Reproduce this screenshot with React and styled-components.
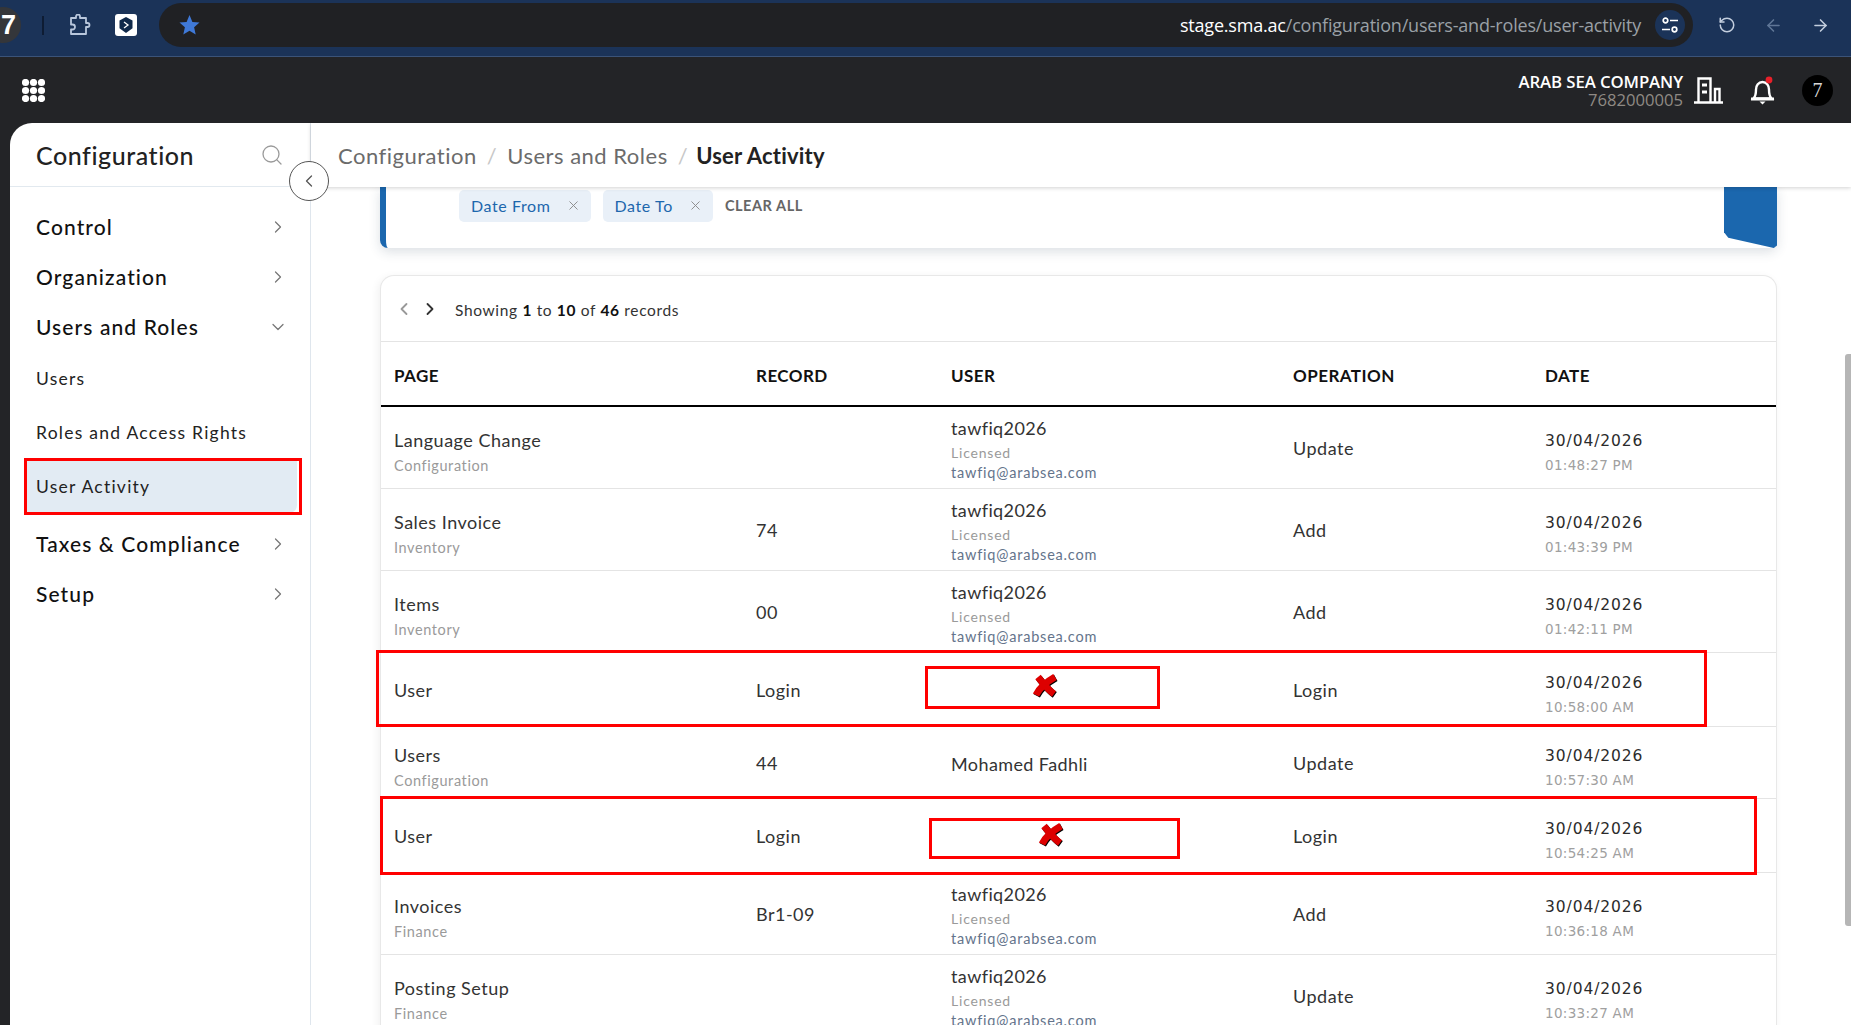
import React from 'react';
import styled, { createGlobalStyle } from 'styled-components';
import { ChevronDown, ChevronLeft, ChevronRight, ArrowLeft, ArrowRight, RotateCcw, Search, X } from 'lucide-react';

const GlobalStyle = createGlobalStyle`
  html, body { margin: 0; padding: 0; height: 100%; overflow: hidden; background: #fff; }
  body { font-family: 'Lato', 'Noto Sans', sans-serif; }
  * { box-sizing: border-box; }
`;

const Page = styled.div`
  position: relative;
  width: 1851px;
  height: 1025px;
  overflow: hidden;
  display: flex;
  flex-direction: column;
`;

const BrowserBar = styled.div`
  height: 57px;
  flex: none;
  background: #1b3358;
  border-bottom: 1px solid #3b5378;
  padding-bottom: 6px;
  display: flex;
  align-items: center;
  position: relative;
`;

const ProfileBadge = styled.div`
  width: 36px;
  height: 36px;
  margin-left: -15px;
  border-radius: 50%;
  background: #34363a;
  color: #fff;
  font-family: 'Liberation Sans', sans-serif;
  font-weight: 700;
  font-size: 27px;
  line-height: 36px;
  text-align: right;
  padding-right: 5px;
  flex: none;
`;

const BarDivider = styled.div`
  width: 2px;
  height: 19px;
  background: #0e1c33;
  margin: 0 25px 0 21px;
  flex: none;
`;

const ExtIcons = styled.div`
  display: flex;
  align-items: center;
  gap: 24px;
  width: 90px;
  flex: none;
`;

const AddressBar = styled.div`
  width: 1534px;
  height: 44px;
  flex: none;
  background: #202124;
  border-radius: 22px;
  display: flex;
  align-items: center;
  padding: 0 8px 0 20px;
`;

const UrlText = styled.div`
  margin-left: auto;
  font-family: 'Open Sans', sans-serif;
  font-size: 18px;
  letter-spacing: -0.2px;
  color: #9aa0a6;
  white-space: nowrap;
  span { color: #fff; }
`;

const TuneButton = styled.div`
  width: 30px;
  height: 30px;
  margin-left: 14px;
  border-radius: 50%;
  background: #1b3358;
  display: flex;
  align-items: center;
  justify-content: center;
  flex: none;
`;

const NavButtons = styled.div`
  display: flex;
  align-items: center;
  gap: 28px;
  margin-left: 25px;
  color: #c3cede;
`;

const AppHeader = styled.header`
  height: 66px;
  flex: none;
  background: #232427;
  display: flex;
  align-items: center;
  padding: 0 18px 0 22px;
`;

const Company = styled.div`
  margin-left: auto;
  padding-top: 1px;
  text-align: right;
  line-height: 18px;
  font-family: 'Open Sans', sans-serif;
`;

const CompanyName = styled.div`
  color: #fff;
  font-size: 16.8px;
  font-weight: 600;
  letter-spacing: -0.1px;
`;

const CompanyCode = styled.div`
  color: #8f8a84;
  font-size: 16.6px;
`;

const HeaderIcons = styled.div`
  display: flex;
  align-items: center;
  margin-left: 11px;
  gap: 27px;
`;

const Avatar = styled.div`
  width: 31px;
  height: 31px;
  border-radius: 50%;
  background: #000;
  color: #d8d8d8;
  font-family: 'Liberation Serif', serif;
  font-size: 20px;
  line-height: 30px;
  text-align: center;
`;

const Body = styled.div`
  flex: 1;
  min-height: 0;
  display: flex;
  background: #232427;
  padding-left: 10px;
  position: relative;
`;

const Sidebar = styled.aside`
  width: 301px;
  flex: none;
  background: #fff;
  border-top-left-radius: 22px;
  border-right: 1px solid #dfe6ed;
`;

const SidebarHead = styled.div`
  height: 64px;
  padding: 0 26px 0 26px;
  display: flex;
  align-items: center;
  justify-content: space-between;
  border-bottom: 1px solid #e2e9ef;
  color: #9a9a9a;
`;

const SidebarTitle = styled.div`
  font-size: 25px;
  font-weight: 500;
  letter-spacing: 0.55px;
  color: #222;
`;

const NavList = styled.nav`
  padding-top: 14px;
  display: flex;
  flex-direction: column;
`;

const NavGroup = styled.div`
  height: 50px;
  padding: 0 22px 0 26px;
  display: flex;
  align-items: center;
  justify-content: space-between;
  font-size: 21px;
  font-weight: 500;
  letter-spacing: 1.1px;
  color: #111;
  svg { color: #777; margin-top: 1px; }
`;

const NavSub = styled.div`
  height: 54px;
  margin: 0 13px 0 17px;
  padding-left: 9px;
  display: flex;
  align-items: center;
  font-size: 17.5px;
  letter-spacing: 1.25px;
  color: #222;
  background: ${({ $active }) => ($active ? '#e2ebf3' : 'transparent')};
  border-bottom-right-radius: ${({ $active }) => ($active ? '8px' : '0')};
  margin-bottom: ${({ $active }) => ($active ? '5px' : '0')};
`;

const CollapseButton = styled.button`
  position: absolute;
  left: 289px;
  top: 38px;
  width: 40px;
  height: 40px;
  padding: 0;
  border-radius: 50%;
  border: 1px solid #555;
  background: #fff;
  color: #555;
  display: flex;
  align-items: center;
  justify-content: center;
  z-index: 3;
`;

const Main = styled.main`
  flex: 1;
  min-width: 0;
  background: #fff;
  display: flex;
  flex-direction: column;
`;

const Breadcrumb = styled.div`
  height: 64px;
  flex: none;
  padding-left: 27px;
  display: flex;
  align-items: center;
  gap: 10px;
  font-size: 22px;
  letter-spacing: 0.5px;
  color: #6b6b6b;
  background: #fff;
  box-shadow: 0 1px 4px rgba(0, 0, 0, 0.18);
  position: relative;
  z-index: 2;
`;

const CrumbSep = styled.span`
  color: #c8c8c8;
`;

const CrumbCurrent = styled.span`
  margin-left: -2px;
  color: #222;
  font-weight: 700;
  letter-spacing: 0.2px;
`;

const Content = styled.div`
  flex: 1;
  min-height: 0;
  overflow: hidden;
  padding: 0 74px 0 69px;
`;

const FilterCard = styled.div`
  height: 61px;
  background: #fff;
  border-left: 6px solid #1b67ae;
  border-bottom-left-radius: 8px;
  border-bottom-right-radius: 8px;
  box-shadow: 0 4px 12px rgba(40, 60, 90, 0.16);
  display: flex;
  align-items: flex-start;
  padding: 3px 0 0 73px;
  position: relative;
`;

const Chip = styled.div`
  height: 32px;
  margin-right: 12px;
  padding: 0 10px 2px 12px;
  display: flex;
  align-items: center;
  gap: 15px;
  background: #e9f0f8;
  border-radius: 5px;
  font-size: 16px;
  letter-spacing: 0.6px;
  color: #1d67ad;
  svg { color: #8a8a8a; }
`;

const ClearAll = styled.div`
  line-height: 32px;
  font-size: 14.5px;
  font-weight: 700;
  letter-spacing: 0.55px;
  color: #666;
`;

const FilterTab = styled.div`
  position: absolute;
  right: 0;
  top: 0;
  width: 53px;
  height: 61px;
  background: #1b67ae;
  clip-path: polygon(0 0, 100% 0, 100% 96%, 94% 100%, 8% 83%, 0 74%);
`;

const TableCard = styled.section`
  margin-top: 27px;
  background: #fff;
  border: 1px solid #e8e8e8;
  border-bottom: none;
  border-radius: 14px 14px 0 0;
  box-shadow: -2px 2px 8px rgba(0, 0, 0, 0.06);
`;

const Toolbar = styled.div`
  height: 66px;
  border-bottom: 1px solid #e4e4e4;
  display: flex;
  align-items: center;
  padding-left: 13px;
`;

const Pager = styled.div`
  display: flex;
  align-items: center;
  gap: 6px;
  margin-right: 15px;
`;

const PagerInfo = styled.div`
  padding-top: 2px;
  font-size: 15.5px;
  letter-spacing: 0.65px;
  color: #333;
  b { color: #111; font-weight: 700; }
`;

const Row = styled.div`
  display: grid;
  grid-template-columns: 362px 195px 342px 252px 1fr;
  align-items: center;
  height: ${({ $h }) => $h}px;
  padding: ${({ $head }) => ($head ? '4px' : '0')} 0 0 13px;
  border-bottom: ${({ $head }) => ($head ? '2px solid #000' : '1px solid #e4e4e4')};
`;

const HeadCell = styled.div`
  font-size: 17px;
  font-weight: 700;
  letter-spacing: 0.45px;
  color: #111;
`;

const Cell = styled.div`
  padding-top: ${({ $stacked }) => ($stacked ? '7px' : '0')};
  font-size: 18px;
  letter-spacing: 0.5px;
  color: #333;
`;

const SubText = styled.div`
  margin-top: 6px;
  font-size: 14.5px;
  letter-spacing: 0.6px;
  color: #9a9a9a;
`;

const UserCell = styled.div`
  padding-top: 2px;
`;

const UserName = styled.div`
  font-size: 18px;
  letter-spacing: 0.4px;
  color: #333;
`;

const UserLicense = styled.div`
  margin-top: 5px;
  font-size: 14px;
  letter-spacing: 0.8px;
  color: #9a9a9a;
`;

const UserMail = styled.div`
  margin-top: 3px;
  font-size: 14.5px;
  letter-spacing: 0.8px;
  color: #64748b;
`;

const DateCell = styled.div`
  padding-top: 10px;
`;

const DateText = styled.div`
  font-family: 'DejaVu Sans', sans-serif;
  font-size: 15.5px;
  letter-spacing: 0.9px;
  color: #2b2b2b;
`;

const TimeText = styled.div`
  margin-top: 7px;
  font-family: 'DejaVu Sans', sans-serif;
  font-size: 13.5px;
  letter-spacing: 0.3px;
  color: #a0a0a0;
`;

const RedFrame = styled.div`
  position: absolute;
  left: ${({ $x }) => $x}px;
  top: ${({ $y }) => $y}px;
  width: ${({ $w }) => $w}px;
  height: ${({ $h }) => $h}px;
  border: 3px solid #ff0000;
  z-index: 5;
  pointer-events: none;
`;

const RedCross = styled.svg`
  position: absolute;
  left: ${({ $x }) => $x}px;
  top: ${({ $y }) => $y}px;
  z-index: 6;
`;

const Scrollbar = styled.div`
  position: absolute;
  right: 0;
  top: 354px;
  width: 6px;
  height: 572px;
  border-radius: 3px 0 0 3px;
  background: #b6b6b6;
  z-index: 4;
`;

const GridIcon = () => (
  <svg width="23" height="23" viewBox="0 0 23 23" fill="#fff">
    {[3.5, 11.5, 19.5].map((cy) =>
      [3.5, 11.5, 19.5].map((cx) => <circle key={`${cx}-${cy}`} cx={cx} cy={cy} r="3.6" />),
    )}
  </svg>
);

const PuzzleIcon = () => (
  <svg width="22" height="22" viewBox="0 0 22 22" fill="none" stroke="#b9c7dc" strokeWidth="1.8" strokeLinejoin="round">
    <path d="M2 4h5V2.500a2 2 0 0 1 4 0V4h6v5h1.500a2 2 0 0 1 0 4H17v7H2v-4.500h1.500a2.500 2.500 0 0 0 0-5H2z" />
  </svg>
);

const DeepIcon = () => (
  <svg width="22" height="22" viewBox="0 0 22 22">
    <rect width="22" height="22" rx="3" fill="#fff" />
    <path d="M11 3l6.500 3.600v7.600L11 19l-6.500-4.800V6.600z" fill="#10294a" />
    <path d="M9 8l4 3-4 3" fill="none" stroke="#fff" strokeWidth="1.300" />
  </svg>
);

const StarIcon = () => (
  <svg width="21" height="20" viewBox="0 0 21 20" fill="#3f79d8">
    <path d="M10.500 0l2.900 6.900 7.100.6-5.400 4.800 1.600 7.300-6.200-3.800-6.200 3.800 1.600-7.300L.5 7.500l7.100-.6z" />
  </svg>
);

const TuneIcon = () => (
  <svg width="18" height="18" viewBox="0 0 18 18" fill="none" stroke="#fff" strokeWidth="1.700">
    <circle cx="4.500" cy="4.500" r="2.300" />
    <path d="M9 4.500h8M1 13.500h8" />
    <circle cx="13.500" cy="13.500" r="2.300" />
  </svg>
);

const BuildingIcon = () => (
  <svg width="29" height="27" viewBox="0 0 29 27" fill="none" stroke="#fff" strokeWidth="2.400">
    <path d="M0 25.500h29M4.500 25.500V1.500h12v24M21 25.500V12h4.500v13.500" />
    <path d="M8 8h5M8 15h5" strokeWidth="3" />
  </svg>
);

const BellIcon = () => (
  <svg width="25" height="29" viewBox="0 0 25 29">
    <path d="M3.500 22.500c2-2 2.500-5 2.500-9 0-4 2.500-7.500 6.500-7.500s6.500 3.500 6.500 7.500c0 4 .5 7 2.500 9z" fill="none" stroke="#fff" strokeWidth="2.400" />
    <path d="M1 23h23" stroke="#fff" strokeWidth="3" />
    <path d="M9.500 25.500h6l-3 3z" fill="#fff" />
    <circle cx="19" cy="4" r="3.400" fill="#e8202a" />
  </svg>
);

const CrossMark = ({ x, y }) => (
  <RedCross $x={x} $y={y} width="28" height="25" viewBox="0 0 28 25" fill="none" strokeWidth="7">
    <g stroke="#000" transform="translate(.8 .9)">
      <path d="M7 3c4 5 9 12 16 17" />
      <path d="M24 3C17 7 9 13 5 21" />
    </g>
    <g stroke="#dd0000">
      <path d="M7 3c4 5 9 12 16 17" />
      <path d="M24 3C17 7 9 13 5 21" />
    </g>
  </RedCross>
);

const rows = [
  { h: 82, page: 'Language Change', sub: 'Configuration', record: '', user: 'tawfiq2026', mail: true, op: 'Update', time: '01:48:27 PM' },
  { h: 82, page: 'Sales Invoice', sub: 'Inventory', record: '74', user: 'tawfiq2026', mail: true, op: 'Add', time: '01:43:39 PM' },
  { h: 82, page: 'Items', sub: 'Inventory', record: '00', user: 'tawfiq2026', mail: true, op: 'Add', time: '01:42:11 PM' },
  { h: 74, page: 'User', sub: '', record: 'Login', user: '', op: 'Login', time: '10:58:00 AM' },
  { h: 72, page: 'Users', sub: 'Configuration', record: '44', user: 'Mohamed Fadhli', op: 'Update', time: '10:57:30 AM' },
  { h: 74, page: 'User', sub: '', record: 'Login', user: '', op: 'Login', time: '10:54:25 AM' },
  { h: 82, page: 'Invoices', sub: 'Finance', record: 'Br1-09', user: 'tawfiq2026', mail: true, op: 'Add', time: '10:36:18 AM' },
  { h: 82, page: 'Posting Setup', sub: 'Finance', record: '', user: 'tawfiq2026', mail: true, op: 'Update', time: '10:33:27 AM' },
];

const App = () => (
  <Page>
    <GlobalStyle />
    <BrowserBar>
      <ProfileBadge>7</ProfileBadge>
      <BarDivider />
      <ExtIcons>
        <PuzzleIcon />
        <DeepIcon />
      </ExtIcons>
      <AddressBar>
        <StarIcon />
        <UrlText><span>stage.sma.ac</span>/configuration/users-and-roles/user-activity</UrlText>
        <TuneButton><TuneIcon /></TuneButton>
      </AddressBar>
      <NavButtons>
        <RotateCcw size={18} />
        <ArrowLeft size={19} color="#5f7696" />
        <ArrowRight size={19} />
      </NavButtons>
    </BrowserBar>

    <AppHeader>
      <GridIcon />
      <Company>
        <CompanyName>ARAB SEA COMPANY</CompanyName>
        <CompanyCode>7682000005</CompanyCode>
      </Company>
      <HeaderIcons>
        <BuildingIcon />
        <BellIcon />
        <Avatar>7</Avatar>
      </HeaderIcons>
    </AppHeader>

    <Body>
      <Sidebar>
        <SidebarHead>
          <SidebarTitle>Configuration</SidebarTitle>
          <Search size={24} strokeWidth={1.3} />
        </SidebarHead>
        <NavList>
          <NavGroup>Control <ChevronRight size={20} strokeWidth={1.5} /></NavGroup>
          <NavGroup>Organization <ChevronRight size={20} strokeWidth={1.5} /></NavGroup>
          <NavGroup>Users and Roles <ChevronDown size={20} strokeWidth={1.5} /></NavGroup>
          <NavSub>Users</NavSub>
          <NavSub>Roles and Access Rights</NavSub>
          <NavSub $active>User Activity</NavSub>
          <NavGroup>Taxes &amp; Compliance <ChevronRight size={20} strokeWidth={1.5} /></NavGroup>
          <NavGroup>Setup <ChevronRight size={20} strokeWidth={1.5} /></NavGroup>
        </NavList>
      </Sidebar>
      <CollapseButton><ChevronLeft size={20} strokeWidth={1.5} /></CollapseButton>

      <Main>
        <Breadcrumb>
          <span>Configuration</span>
          <CrumbSep>/</CrumbSep>
          <span>Users and Roles</span>
          <CrumbSep>/</CrumbSep>
          <CrumbCurrent>User Activity</CrumbCurrent>
        </Breadcrumb>
        <Content>
          <FilterCard>
            <Chip>Date From <X size={15} strokeWidth={1.5} /></Chip>
            <Chip>Date To <X size={15} strokeWidth={1.5} /></Chip>
            <ClearAll>CLEAR ALL</ClearAll>
            <FilterTab />
          </FilterCard>
          <TableCard>
            <Toolbar>
              <Pager>
                <ChevronLeft size={20} color="#999" strokeWidth={2.2} />
                <ChevronRight size={20} color="#333" strokeWidth={2.2} />
              </Pager>
              <PagerInfo>Showing <b>1</b> to <b>10</b> of <b>46</b> records</PagerInfo>
            </Toolbar>
            <Row $h={65} $head>
              <HeadCell>PAGE</HeadCell>
              <HeadCell>RECORD</HeadCell>
              <HeadCell>USER</HeadCell>
              <HeadCell>OPERATION</HeadCell>
              <HeadCell>DATE</HeadCell>
            </Row>
            {rows.map((row) => (
              <Row key={row.time} $h={row.h}>
                <Cell $stacked={!!row.sub}>
                  {row.page}
                  {row.sub && <SubText>{row.sub}</SubText>}
                </Cell>
                <Cell>{row.record}</Cell>
                <UserCell>
                  <UserName>{row.user}</UserName>
                  {row.mail && <UserLicense>Licensed</UserLicense>}
                  {row.mail && <UserMail>tawfiq@arabsea.com</UserMail>}
                </UserCell>
                <Cell>{row.op}</Cell>
                <DateCell>
                  <DateText>30/04/2026</DateText>
                  <TimeText>{row.time}</TimeText>
                </DateCell>
              </Row>
            ))}
          </TableCard>
        </Content>
      </Main>
    </Body>

    <Scrollbar />
    <RedFrame $x={24} $y={458} $w={278} $h={57} />
    <RedFrame $x={376} $y={650} $w={1331} $h={77} />
    <RedFrame $x={925} $y={666} $w={235} $h={43} />
    <CrossMark x={1031} y={674} />
    <RedFrame $x={380} $y={796} $w={1377} $h={79} />
    <RedFrame $x={929} $y={818} $w={251} $h={41} />
    <CrossMark x={1037} y={823} />
  </Page>
);

export default App;
